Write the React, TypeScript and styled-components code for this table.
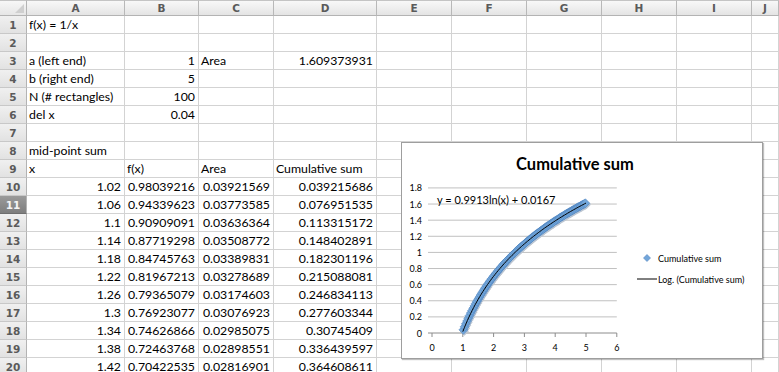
import React from 'react'
import styled, { createGlobalStyle } from 'styled-components'

const GlobalStyle = createGlobalStyle`
  html, body { margin: 0; padding: 0; background: #fff; overflow: hidden; }
  body { font-family: Lato, "Liberation Sans", sans-serif; }
`

const COLS = ['A', 'B', 'C', 'D', 'E', 'F', 'G', 'H', 'I', 'J']
const WIDTHS = [98, 74, 75, 103, 75, 75, 75, 75, 75]
const ACTIVE_ROW = 11

// mid-point sum for f(x) = 1/x on [1, 5] with N = 100
const N = 100
const DX = 0.04
const points: { x: number; y: number }[] = []
{
  let acc = 0
  for (let i = 0; i < N; i++) {
    const x = 1 + DX / 2 + i * DX
    acc += DX / x
    points.push({ x, y: acc })
  }
}

const SHEET: string[][] = [
  ['f(x) = 1/x'],
  [],
  ['a (left end)', '1', 'Area', '1.609373931'],
  ['b (right end)', '5'],
  ['N (# rectangles)', '100'],
  ['del x', '0.04'],
  [],
  ['mid-point sum'],
  ['x', 'f(x)', 'Area', 'Cumulative sum'],
  ['1.02', '0.98039216', '0.03921569', '0.039215686'],
  ['1.06', '0.94339623', '0.03773585', '0.076951535'],
  ['1.1', '0.90909091', '0.03636364', '0.113315172'],
  ['1.14', '0.87719298', '0.03508772', '0.148402891'],
  ['1.18', '0.84745763', '0.03389831', '0.182301196'],
  ['1.22', '0.81967213', '0.03278689', '0.215088081'],
  ['1.26', '0.79365079', '0.03174603', '0.246834113'],
  ['1.3', '0.76923077', '0.03076923', '0.277603344'],
  ['1.34', '0.74626866', '0.02985075', '0.30745409'],
  ['1.38', '0.72463768', '0.02898551', '0.336439597'],
  ['1.42', '0.70422535', '0.02816901', '0.364608611'],
]

const Sheet = styled.div`
  position: relative;
  display: grid;
  grid-template-columns: 27px ${WIDTHS.map((w) => `${w}px`).join(' ')} 1fr;
  grid-template-rows: 16px repeat(${SHEET.length}, 18px);
  width: 779px;
  height: 372px;
  overflow: hidden;
`

const Corner = styled.div`
  position: relative;
  box-sizing: border-box;
  background: linear-gradient(#f7f7f7, #e6e6e6);
  border-top: 1px solid #c4c4c4;
  border-right: 1px solid #b3b3b3;
  border-bottom: 1px solid #b3b3b3;
  &::after {
    content: '';
    position: absolute;
    right: 2px;
    bottom: 2px;
    border-left: 9px solid transparent;
    border-bottom: 9px solid #cfcfcf;
  }
`

const ColHead = styled.div`
  box-sizing: border-box;
  display: flex;
  align-items: center;
  justify-content: center;
  background: linear-gradient(#f8f8f8, #e4e4e4);
  border-top: 1px solid #c4c4c4;
  border-right: 1px solid #b8b8b8;
  border-bottom: 1px solid #b3b3b3;
  font: bold 10.5px "DejaVu Sans", sans-serif;
  color: #5a5a5a;
`

const RowHead = styled.div<{ $active?: boolean }>`
  box-sizing: border-box;
  display: flex;
  align-items: center;
  justify-content: center;
  background: ${(p) =>
    p.$active ? 'linear-gradient(#9a9a9a, #7e7e7e)' : 'linear-gradient(#f0f0f0, #e2e2e2)'};
  border-right: 1px solid #b3b3b3;
  border-bottom: 1px solid ${(p) => (p.$active ? '#6e6e6e' : '#c8c8c8')};
  font: bold 10.5px "DejaVu Sans", sans-serif;
  color: ${(p) => (p.$active ? '#f4f4f4' : '#5a5a5a')};
`

const Cell = styled.div<{ $right?: boolean }>`
  box-sizing: border-box;
  border-right: 1px solid #d3d3d3;
  border-bottom: 1px solid #d3d3d3;
  padding: 0 3px 0 2px;
  font-size: 12.3px;
  line-height: 17px;
  color: #000;
  white-space: nowrap;
  overflow: visible;
  text-align: ${(p) => (p.$right ? 'right' : 'left')};
`

const ChartBox = styled.div`
  position: absolute;
  left: 401px;
  top: 142px;
  width: 362px;
  height: 217px;
  box-sizing: border-box;
  background: #fff;
  border: 1px solid #9e9e9e;
  box-shadow: 1px 1px 1px rgba(0, 0, 0, 0.25);
`

// plot mapping inside the chart frame
const X = (v: number) => 30 + v * 30.8
const Y = (v: number) => 190 - v * 80.6

const diamond = (cx: number, cy: number, r: number) =>
  `${cx},${cy - r} ${cx + r},${cy} ${cx},${cy + r} ${cx - r},${cy}`

function CumulativeChart() {
  const grid = [0.2, 0.4, 0.6, 0.8, 1, 1.2, 1.4, 1.6, 1.8]
  const yLabels = [0, 0.2, 0.4, 0.6, 0.8, 1, 1.2, 1.4, 1.6, 1.8]
  const trend: string[] = []
  for (let x = 1; x <= 5.0001; x += 0.05) {
    trend.push(`${X(x).toFixed(2)},${Y(0.9913 * Math.log(x) + 0.0167).toFixed(2)}`)
  }
  return (
    <ChartBox>
      <svg width="360" height="215" fontFamily="Lato, 'Liberation Sans', sans-serif">
        <text x="173" y="27" textAnchor="middle" fontSize="16.5" fontWeight="bold" fill="#000">
          Cumulative sum
        </text>

        {grid.map((v) => (
          <line key={v} x1={X(0) - 4} x2={X(6)} y1={Y(v)} y2={Y(v)} stroke="#c0c0c0" strokeWidth="1" />
        ))}
        <line x1={X(0) - 4} x2={X(6)} y1={Y(0)} y2={Y(0)} stroke="#8c8c8c" strokeWidth="1" />
        {[0, 1, 2, 3, 4, 5, 6].map((v) => (
          <line key={v} x1={X(v)} x2={X(v)} y1={Y(0)} y2={Y(0) + 4} stroke="#8c8c8c" strokeWidth="1" />
        ))}

        {yLabels.map((v) => (
          <text key={v} x="20" y={Y(v) + 3.5} textAnchor="end" fontSize="9" fill="#000">
            {v}
          </text>
        ))}
        {[0, 1, 2, 3, 4, 5, 6].map((v) => (
          <text key={v} x={X(v)} y="208" textAnchor="middle" fontSize="9" fill="#000">
            {v}
          </text>
        ))}

        {points.map((p, i) => (
          <polygon key={`s${i}`} points={diamond(X(p.x) + 1, Y(p.y) + 1.5, 4.5)} fill="#bcc6d2" />
        ))}
        {points.map((p, i) => (
          <polygon
            key={i}
            points={diamond(X(p.x), Y(p.y), 4.5)}
            fill="#72a6da"
            stroke="#5185c0"
            strokeWidth="0.6"
          />
        ))}
        <polyline points={trend.join(' ')} fill="none" stroke="#000" strokeWidth="1" />

        <text x="35" y="61" fontSize="11" fill="#000">
          y = 0.9913ln(x) + 0.0167
        </text>

        <polygon points={diamond(245, 115, 3.5)} fill="#72a6da" stroke="#5185c0" strokeWidth="0.6" />
        <text x="256" y="119" fontSize="9" fill="#000">
          Cumulative sum
        </text>
        <line x1="235" x2="255" y1="136" y2="136" stroke="#000" strokeWidth="1" />
        <text x="256" y="140" fontSize="9" fill="#000">
          Log. (Cumulative sum)
        </text>
      </svg>
    </ChartBox>
  )
}

const isNumber = (s: string) => /^-?\d*\.?\d+$/.test(s)

export default function App() {
  return (
    <>
      <GlobalStyle />
      <Sheet>
        <Corner />
        {COLS.map((c) => (
          <ColHead key={c}>{c}</ColHead>
        ))}
        {SHEET.map((row, r) => (
          <React.Fragment key={r}>
            <RowHead $active={r + 1 === ACTIVE_ROW}>{r + 1}</RowHead>
            {COLS.map((c, ci) => {
              const v = row[ci] ?? ''
              return (
                <Cell key={c} $right={isNumber(v)}>
                  {v}
                </Cell>
              )
            })}
          </React.Fragment>
        ))}
        <CumulativeChart />
      </Sheet>
    </>
  )
}
